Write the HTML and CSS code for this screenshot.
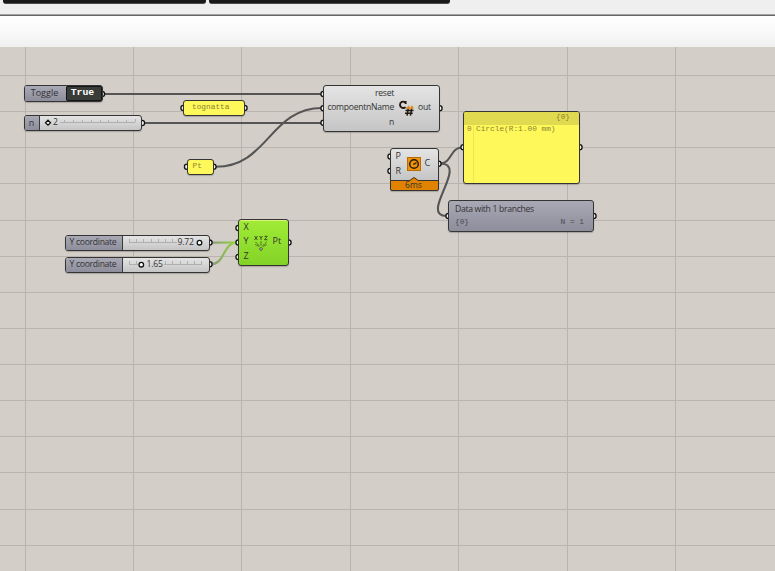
FILE: index.html
```html
<!DOCTYPE html>
<html lang="en">
<head>
<meta charset="utf-8">
<title>Node canvas</title>
<link rel="stylesheet" href="styles.css">
</head>
<body>
<header class="tabs"><div class="tab tab-a"></div><div class="tab tab-b"></div></header>
<div class="toolbar"></div>
<main class="canvas">
  <svg class="wires" viewBox="0 47 775 524" width="775" height="524">
    <path class="grid" d="M25.5 47V571M133.5 47V571M241.5 47V571M350.5 47V571M458.5 47V571M567.5 47V571M675.5 47V571M0 75.5H775M0 111.5H775M0 147.5H775M0 183.5H775M0 220.5H775M0 256.5H775M0 292.5H775M0 328.5H775M0 364.5H775M0 400.5H775M0 436.5H775M0 472.5H775M0 509.5H775M0 545.5H775"/>
    <g class="wire">
      <path d="M104 94H322"/>
      <path d="M144 123H322"/>
      <path d="M216 166.7C268 166.7 270 108 322 108"/>
      <path d="M440 163.5C452 163.5 450 147.5 462 147.5"/>
      <path d="M440 163.5C470 163.5 418 216 447 216"/>
    </g>
    <linearGradient id="live" gradientUnits="userSpaceOnUse" x1="211" y1="0" x2="237" y2="0"><stop offset="0" stop-color="#8d9684"/><stop offset="1" stop-color="#8fdb31"/></linearGradient>
    <path class="live" d="M211 242.6L237 242.5M211 264.3C225 264.3 223 242.5 237 242.5"/>
    <g class="port">
      <circle cx="102" cy="94" r="2.6"/><circle cx="142" cy="123" r="2.6"/>
      <circle cx="183.5" cy="108" r="2.6"/><circle cx="244.5" cy="108" r="2.6"/>
      <circle cx="187" cy="166.8" r="2.6"/><circle cx="213.5" cy="166.8" r="2.6"/>
      <circle cx="323.5" cy="94" r="2.6"/><circle cx="323.5" cy="108.3" r="2.6"/><circle cx="323.5" cy="122.7" r="2.6"/><circle cx="439.5" cy="108.3" r="2.6"/>
      <circle cx="390.5" cy="156.5" r="2.6"/><circle cx="390.5" cy="171" r="2.6"/><circle cx="438.5" cy="163.7" r="2.6"/>
      <circle cx="463.5" cy="147.3" r="2.6"/><circle cx="579.5" cy="147.3" r="2.6"/>
      <circle cx="448.5" cy="216" r="2.6"/><circle cx="593.5" cy="216" r="2.6"/>
      <circle cx="209.5" cy="242.6" r="2.6"/><circle cx="209.5" cy="264.3" r="2.6"/>
      <circle cx="238.5" cy="228" r="2.6"/><circle cx="238.5" cy="242.5" r="2.6"/><circle cx="238.5" cy="257" r="2.6"/><circle cx="288.5" cy="242.5" r="2.6"/>
    </g>
  </svg>

  <div class="node toggle"><span class="tag">Toggle</span><span class="value">True</span></div>

  <div class="node slider slider-n"><span class="tag">n</span>
    <svg class="track" width="102" height="14"><path class="ticks" d="M20 6.5H95M24.5 4V6M33.5 4V6M42.5 4V6M51.5 4V6M60.5 4V6M68.5 4V6M77.5 4V6M86.5 4V6M95.5 3V6"/><path class="knob" d="M8 4.2L10.5 6.7L8 9.2L5.5 6.7Z"/><text x="13" y="9.2">2</text></svg>
  </div>

  <div class="node panel note-name">tognatta</div>
  <div class="node panel note-pt">Pt</div>

  <div class="node component script">
    <div class="pins in"><span>reset</span><span>compoentnName</span><span>n</span></div>
    <svg class="icon" width="17" height="18" viewBox="0 0 17 18"><path d="M7.6 4V1M7.3 2.4C5 .8 2 1.8 2 4.8S5 8.8 7.6 7.2" fill="none" stroke="#21180f" stroke-width="1.9"/><path d="M8 8H15.5M10.8 5.8L10 9M14.2 5.8L13.4 9" fill="none" stroke="#d98a18" stroke-width="1.6"/><path d="M7.5 10.5H15.5M7 13.3H14.7M10.2 9L9 15.7M13.6 9L12.4 15.7" fill="none" stroke="#21180f" stroke-width="1.5"/></svg>
    <div class="pins out"><span>out</span></div>
  </div>

  <div class="node component circle">
    <div class="pins in"><span>P</span><span>R</span></div>
    <svg class="icon" width="14" height="14" viewBox="0 0 14 14"><rect x=".5" y=".5" width="13" height="13" fill="#ed930c" stroke="#b86d00"/><circle cx="7" cy="7" r="4.3" fill="none" stroke="#2b1a05" stroke-width="1.5"/><path d="M7 7.2L9.5 5.5M6.3 7H7.9" stroke="#2b1a05" stroke-width="1.3"/></svg>
    <div class="pins out"><span>C</span></div>
  </div>
  <div class="node timing">6ms<svg class="pointer" width="10" height="5" viewBox="0 0 10 5"><path d="M0 4L5 .5L10 4" fill="#e28300" stroke="#493007"/><path d="M1 4.5H9" stroke="#e28300"/></svg></div>

  <div class="node panel output">
    <div class="path">{0}</div>
    <div class="row"><span class="index">0</span><span class="item">Circle(R:1.00 mm)</span></div>
  </div>

  <div class="node tree"><div>Data with 1 branches</div><div class="branch"><span>{0}</span><span>N = 1</span></div></div>

  <div class="node slider slider-y1"><span class="tag">Y coordinate</span>
    <svg class="track" width="86" height="14"><path class="ticks" d="M6 6.5H54M6.5 3V6M13.5 3V6M20.5 3V6M28.5 3V6M35.5 3V6M42.5 3V6M49.5 3V6"/><circle class="knob" cx="76.5" cy="6.7" r="2.3"/><text x="54.5" y="9">9.72</text></svg>
  </div>
  <div class="node slider slider-y2"><span class="tag">Y coordinate</span>
    <svg class="track" width="86" height="14"><path class="ticks" d="M6 6.5H15M41 6.5H79M6.5 3V6M13.5 3V6M42.5 3V6M49.5 3V6M57.5 3V6M64.5 3V6M71.5 3V6M78.5 3V6"/><circle class="knob" cx="18.3" cy="6.7" r="2.3"/><text x="23.5" y="9">1.65</text></svg>
  </div>

  <div class="node component point">
    <div class="pins in"><span>X</span><span>Y</span><span>Z</span></div>
    <svg class="icon" width="16" height="16" viewBox="0 0 16 16"><g fill="none" stroke="#31451b" stroke-width=".9"><path d="M1.5 1L4.5 5M4.5 1L1.5 5M6.5 1L8 3L9.5 1M8 3V5M11.5 1.3H14.2L11.5 4.7H14.5"/><path d="M2.5 7L6.5 11M8 6.5V10.5M13.5 7L9.5 11" stroke-dasharray="2 .6"/><path d="M2 9.5L6.5 11.7M14 9.5L9.5 11.7" stroke-width=".6"/><circle cx="8" cy="14" r="1.3" fill="#eee"/></g></svg>
    <div class="pins out"><span>Pt</span></div>
  </div>
</main>
</body>
</html>
```
FILE: styles.css
```css
* { box-sizing: border-box; }
body {
  margin: 0;
  width: 775px;
  height: 571px;
  overflow: hidden;
  display: flex;
  flex-direction: column;
  font: 9px/12px "Open Sans", "Noto Sans", sans-serif;
  color: #333;
}
.tabs {
  flex: none;
  height: 16px;
  padding-left: 3px;
  display: flex;
  gap: 3px;
  background: #efefef;
  border-bottom: 1px solid #666;
  box-shadow: inset 0 -1px #a3a3a3;
}
.tab { height: 4px; background: #1a1a1a; border-bottom: 1px solid #4b4b4b; border-radius: 0 0 3px 3px; }
.tab-a { width: 203px; }
.tab-b { width: 241px; }
.toolbar { flex: none; height: 31px; background: linear-gradient(#fff, #f7f7f7 65%, #efefef); }
.canvas { position: relative; flex: 1; background: #d3cec7; overflow: hidden; }
.wires { display: block; }
.grid { fill: none; stroke: #b9b5ae; }
.wire { fill: none; stroke: #555; stroke-width: 2.1; }
.live { fill: none; stroke: url(#live); stroke-width: 2.2; }
.port { fill: #f3f3f3; stroke: #111; stroke-width: 1.3; }

.node {
  position: absolute;
  display: flex;
  border: 1px solid #343434;
  border-radius: 3px;
  background: linear-gradient(#e4e4e4, #c5c5c5);
  box-shadow: 0 1px 1px #0003;
  white-space: nowrap;
}
.tag {
  display: flex;
  align-items: center;
  justify-content: center;
  padding-bottom: 1px;
  background: linear-gradient(#a9a8b5, #8e8d9b);
  border-right: 1px solid #3a3a3a;
  border-radius: 2px 0 0 2px;
}
.toggle { left: 24px; top: 38px; width: 79px; height: 17px; }
.toggle .tag { width: 41px; border: 0; padding-right: 2px; }
.value {
  flex: 1;
  display: flex;
  align-items: center;
  justify-content: center;
  padding: 0 3px 1px 0;
  background: #393c37;
  border: 1px solid #151515;
  border-radius: 1px;
  color: #fff;
  font: bold 9.8px/10px "Liberation Mono", monospace;
}
.slider { height: 16px; }
.slider-n { left: 24px; top: 68px; width: 118px; }
.slider-n .tag { width: 15px; padding-right: 1px; }
.slider-y1, .slider-y2 { left: 65px; width: 145px; }
.slider-y1 { top: 188px; }
.slider-y2 { top: 209.5px; }
.slider-y1 .tag, .slider-y2 .tag { width: 57px; padding: 0 2px 2px 0; font-size: 8.6px; letter-spacing: -.3px; }
.track text { font-size: 8.6px; letter-spacing: -.2px; fill: #333; }
.ticks { fill: none; stroke: #a5a5a5; stroke-width: .8; }
.knob { fill: #fff; stroke: #111; stroke-width: 1.3; }

.panel {
  background: #fff85b;
  color: #8b8530;
  font: 7.8px/10px "Liberation Mono", monospace;
}
.note-name { left: 183px; top: 53px; width: 62px; height: 16px; padding: 1px 0 0 8px; }
.note-pt { left: 187px; top: 112px; width: 27px; height: 16px; padding: 1px 0 0 4.5px; }

.component { align-items: center; }
.pins { display: flex; flex-direction: column; }
.pins span { height: 14.5px; line-height: 12px; }
.in { text-align: right; }
.script { left: 323px; top: 38px; width: 117px; height: 47px; font-size: 8.6px; letter-spacing: -.27px; }
.script .in { width: 70px; align-items: flex-end; }
.script .icon { margin: 0 3px 0 4px; }
.circle { left: 390px; top: 101px; width: 49px; height: 33px; border-radius: 3px 3px 0 0; }
.circle .icon { margin-bottom: 2px; }
.circle .in, .point .in { text-align: left; }
.circle .in { width: 16px; padding-left: 4.5px; }
.circle .out { padding-left: 3.5px; }
.timing {
  left: 390px;
  top: 133px;
  width: 49px;
  height: 11px;
  padding-right: 2px;
  justify-content: center;
  background: #e28300;
  border-radius: 0 0 2px 2px;
  font-size: 8.5px;
  line-height: 7px;
}
.pointer { position: absolute; left: 18px; top: -4px; }
.output { left: 463px; top: 64px; width: 117px; height: 73px; flex-direction: column; background: linear-gradient(90deg, #fff85b 9px, #eee650 9px, #eee650 10.5px, #fff85b 10.5px); }
.path { height: 13px; padding-right: 9px; text-align: right; background: #e0da50; border-radius: 2px 2px 0 0; line-height: 10px; }
.row { display: flex; line-height: 8px; }
.index { width: 12px; padding-left: 3px; color: #9b7530; }
.tree { left: 448px; top: 153px; width: 146px; height: 32px; padding: 2px 9px 0 6px; flex-direction: column; background: linear-gradient(#a9a8b5, #8e8d9b); font-size: 8.6px; line-height: 13px; letter-spacing: -.3px; }
.branch { display: flex; justify-content: space-between; color: #4a4a50; font: 7.8px/13px "Liberation Mono", monospace; letter-spacing: 0; }
.point { left: 238px; top: 172px; width: 51px; height: 47px; background: linear-gradient(#a0eb36, #83d327); box-shadow: inset 0 1px #dcf27a, 0 1px 1px #0003; }
.point .in { width: 13.5px; padding-left: 4.5px; }
.point .out { padding-left: 4px; }
```
